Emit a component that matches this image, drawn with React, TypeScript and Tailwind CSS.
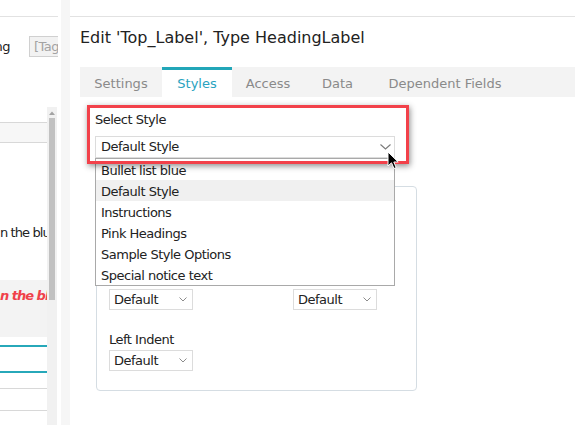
import React from 'react';

const styleOptions = [
  'Bullet list blue',
  'Default Style',
  'Instructions',
  'Pink Headings',
  'Sample Style Options',
  'Special notice text',
];

const tabs = [
  { name: 'Settings', width: 'w-[82px]', active: false },
  { name: 'Styles', width: 'w-[70px]', active: true },
  { name: 'Access', width: 'w-[72px]', active: false },
  { name: 'Data', width: 'w-[67px]', active: false },
  { name: 'Dependent Fields', width: 'w-[148px]', active: false },
];

function SmallSelect() {
  return (
    <div className="flex h-[21px] w-[84px] shrink-0 items-center justify-between border border-[#dcdcdc] bg-white pl-[4px] pr-[5px]">
      <span>Default</span>
      <svg width="8" height="5" viewBox="0 0 8 5">
        <path d="M0.5 0.5 L4 4 L7.5 0.5" fill="none" stroke="#8c8c8c" strokeWidth="1" />
      </svg>
    </div>
  );
}

function LeftPanel() {
  return (
    <div className="flex w-[58px] shrink-0 flex-col overflow-hidden">
      <div className="h-[17px] shrink-0 border-b border-[#e2e2e2]" />
      <div className="mt-[19px] flex h-[21px] shrink-0 items-center">
        <div className="flex w-[10px] shrink-0 justify-end overflow-hidden whitespace-nowrap">Heading</div>
        <div className="ml-[19px] h-[21px] w-[40px] shrink-0 overflow-hidden whitespace-nowrap border border-[#d0d0d0] bg-[#f2f2f2] pl-[4px] leading-[19px] text-[#a3a3a3]">
          [Tag]
        </div>
      </div>

      <div className="mt-[50px] flex flex-1">
        <div className="flex w-[47px] shrink-0 flex-col overflow-hidden">
          <div className="mt-[15px] h-[21px] border-y border-[#d8d8d8] bg-[#f7f7f7]" />
          <div className="mt-[82px] whitespace-nowrap tracking-[-0.9px]">n the blue box</div>
          <div className="mt-[39px] h-[57px] whitespace-nowrap bg-[#f3f3f3] pt-[8px] font-bold italic tracking-[-1px] text-[#f0414a]">
            n the blue box
          </div>
          <div className="mt-[8px] h-[2px] bg-[#27a8b9]" />
          <div className="mt-[24px] h-[2px] bg-[#27a8b9]" />
          <div className="mt-[15px] h-[1px] bg-[#d8d8d8]" />
          <div className="mt-[21px] h-[1px] bg-[#d8d8d8]" />
        </div>
        <div className="flex w-[10px] shrink-0 flex-col bg-[#f1f1f1]">
          <div className="flex h-[11px] items-center justify-center">
            <svg width="6" height="4" viewBox="0 0 6 4">
              <path d="M0 4 L3 0.5 L6 4 Z" fill="#a3a3a3" />
            </svg>
          </div>
          <div className="ml-[2px] h-[182px] w-[6px] bg-[#c1c1c1]" />
        </div>
      </div>
    </div>
  );
}

export default function App() {
  return (
    <div className="relative h-[425px] w-[575px] overflow-hidden bg-white font-['DejaVu_Sans',sans-serif] text-[13px] leading-[16px] tracking-[-0.5px] text-[#222]">
      <div className="flex h-full">
        <LeftPanel />

        <div className="flex w-[12px] shrink-0">
          <div className="w-[3px]" />
          <div className="w-[9px] bg-[#f6f6f6]" />
        </div>

        <div className="min-w-0 flex-1">
          <div className="h-[17px] border-b border-[#e2e2e2]" />
          <h1 className="ml-[10px] mt-[11px] whitespace-nowrap text-[16px] font-normal leading-[20px] tracking-normal">
            Edit 'Top_Label', Type HeadingLabel
          </h1>

          <div className="ml-[10px] mt-[19px] flex h-[30px] bg-[#f3f3f3] tracking-normal">
            {tabs.map((t) => (
              <div
                key={t.name}
                className={
                  t.active
                    ? `${t.width} flex shrink-0 items-center justify-center whitespace-nowrap border-t-[3px] border-[#22a6b8] bg-white pt-[1px] text-[#2aa3c0]`
                    : `${t.width} flex shrink-0 items-center justify-center whitespace-nowrap border-t-[3px] border-transparent pt-[1px] text-[#8a8a8a]`
                }
              >
                {t.name}
              </div>
            ))}
          </div>

          <div className="pl-[25px] pt-[15px]">
            <div>Select Style</div>
            <div className="mt-[8px] flex h-[22px] w-[300px] items-center justify-between border border-[#dcdcdc] bg-white pl-[5px] pr-[3px]">
              <span>Default Style</span>
              <svg width="11" height="6" viewBox="0 0 11 6">
                <path d="M0.5 0.5 L5.5 5 L10.5 0.5" fill="none" stroke="#7a7a7a" strokeWidth="1.1" />
              </svg>
            </div>

            <div className="ml-[1px] mt-[28px] w-[321px] rounded-[4px] border border-[#d5dde3] px-[12px] pb-[19px] pt-[102px]">
              <div className="flex gap-[100px]">
                <SmallSelect />
                <SmallSelect />
              </div>
              <div className="mt-[22px]">Left Indent</div>
              <div className="mt-[2px]">
                <SmallSelect />
              </div>
            </div>
          </div>
        </div>
      </div>

      {/* open native list of the style select */}
      <div className="absolute left-[95px] top-[158px] w-[300px] border border-[#a9a9a9] bg-white">
        {styleOptions.map((o) => (
          <div
            key={o}
            className={
              o === 'Default Style'
                ? 'h-[21px] bg-[#f0f0f0] pl-[5px] pt-[2px] leading-[19px]'
                : 'h-[21px] pl-[5px] pt-[2px] leading-[19px]'
            }
          >
            {o}
          </div>
        ))}
      </div>

      {/* red highlight annotation */}
      <div className="absolute left-[87px] top-[105px] h-[59px] w-[322px] border-[3px] border-[#f2414a] shadow-[1px_2px_6px_rgba(0,0,0,0.45)]" />

      {/* mouse pointer */}
      <svg className="absolute left-[387px] top-[151px]" width="14" height="20" viewBox="0 0 14 20">
        <path d="M1 1 L1 15 L4.5 11.8 L7 17.5 L9.2 16.6 L6.8 11 L11.2 11 Z" fill="#000" stroke="#fff" strokeWidth="1" strokeLinejoin="round" />
      </svg>
    </div>
  );
}
